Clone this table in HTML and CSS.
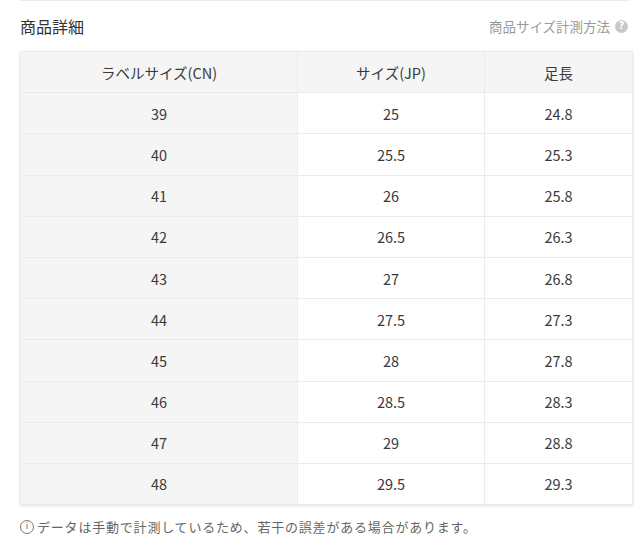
FILE: index.html
```html
<!DOCTYPE html>
<html lang="ja">
<head>
<meta charset="utf-8">
<link rel="stylesheet" href="styles.css">
</head>
<body>
<div class="page">
  <div class="topline"></div>
  <div class="head">
    <h2 class="title">商品詳細</h2>
    <a class="guide">商品サイズ計測方法<span class="qicon">?</span></a>
  </div>
  <table class="size">
    <thead>
      <tr><th class="c1">ラベルサイズ(CN)</th><th class="c2">サイズ(JP)</th><th class="c3">足長</th></tr>
    </thead>
    <tbody>
      <tr><td class="c1">39</td><td>25</td><td>24.8</td></tr>
      <tr><td class="c1">40</td><td>25.5</td><td>25.3</td></tr>
      <tr><td class="c1">41</td><td>26</td><td>25.8</td></tr>
      <tr><td class="c1">42</td><td>26.5</td><td>26.3</td></tr>
      <tr><td class="c1">43</td><td>27</td><td>26.8</td></tr>
      <tr><td class="c1">44</td><td>27.5</td><td>27.3</td></tr>
      <tr><td class="c1">45</td><td>28</td><td>27.8</td></tr>
      <tr><td class="c1">46</td><td>28.5</td><td>28.3</td></tr>
      <tr><td class="c1">47</td><td>29</td><td>28.8</td></tr>
      <tr><td class="c1">48</td><td>29.5</td><td>29.3</td></tr>
    </tbody>
  </table>
  <p class="note"><span class="info">i</span>データは手動で計測しているため、若干の誤差がある場合があります。</p>
</div>
</body>
</html>
```
FILE: styles.css
```css
html, body {
  margin: 0;
  padding: 0;
  background: #fff;
}
body {
  font-family: "Noto Sans CJK JP", "Noto Sans", sans-serif;
  color: #333;
}
.page {
  padding: 0 7px 0 20px;
}
.topline {
  height: 1px;
  background: #ececec;
  margin-right: 3px;
}
.head {
  display: flex;
  justify-content: space-between;
  align-items: center;
  height: 50px;
}
.title {
  margin: 0;
  font-size: 16px;
  font-weight: normal;
  color: #333;
}
.guide {
  display: flex;
  align-items: center;
  font-size: 13.5px;
  color: #999;
  margin-right: 5px;
}
.qicon {
  display: inline-flex;
  align-items: center;
  justify-content: center;
  width: 13px;
  height: 13px;
  border-radius: 50%;
  background: #c8c8c8;
  color: #fff;
  font-size: 10px;
  font-weight: bold;
  margin-left: 5px;
  line-height: 1;
  font-family: "DejaVu Sans", sans-serif;
}
.size {
  width: 613px;
  border-collapse: collapse;
  table-layout: fixed;
  box-shadow: 0 1px 3px rgba(0,0,0,0.12);
  font-size: 14.5px;
  color: #3a3a3a;
}
.size th, .size td {
  height: 40.2px;
  padding: 0;
  text-align: center;
  border: 1px solid #ebebeb;
  font-weight: normal;
}
.size th {
  background: #f5f5f5;
}
.size .c1 {
  width: 276px;
  background: #f5f5f5;
}
.size .c2 {
  width: 186px;
}
.note {
  margin: 12px 0 0;
  font-size: 13px;
  color: #666;
  letter-spacing: 0.8px;
  display: flex;
  align-items: center;
}
.info {
  display: inline-flex;
  align-items: center;
  justify-content: center;
  width: 12px;
  height: 12px;
  border: 1px solid #777;
  border-radius: 50%;
  font-size: 9px;
  color: #666;
  margin-right: 3px;
  line-height: 1;
  letter-spacing: 0;
  font-family: "DejaVu Sans", sans-serif;
}
```
